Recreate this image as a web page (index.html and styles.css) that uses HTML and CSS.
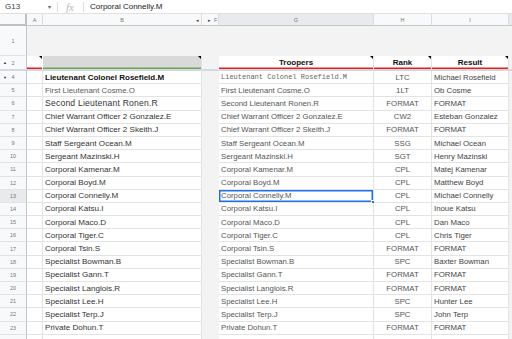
FILE: index.html
```html
<!DOCTYPE html>
<html lang="en">
<head>
  <meta charset="UTF-8" />
  <title>Troopers</title>
  <link rel="stylesheet" href="styles.css">
</head>
<body>

  <div class="formula-bar">
    <span class="name-box">G13</span>
    <span class="name-arrow">&#9662;</span>
    <span class="divider"></span>
    <span class="fx">fx</span>
    <span class="divider"></span>
    <span class="formula">Corporal Connelly.M</span>
  </div>

  <div class="sheet">
    <div class="row col-heads">
      <div class="corner"></div>
      <div class="col-head">A</div>
      <div class="col-head">B <span class="hidden-arrows">&#9666;</span></div>
      <div class="col-head col-f"><span class="hidden-arrows">&#9656;</span>F</div>
      <div class="col-head active">G</div>
      <div class="col-head">H</div>
      <div class="col-head">I</div>
      <div class="col-head blank"></div>
    </div>

    <div class="row row-1">
      <div class="row-head">1</div>
      <div class="cell grey"></div>
      <div class="cell grey"></div>
      <div class="cell grey"></div>
      <div class="cell grey"></div>
      <div class="cell grey"></div>
      <div class="cell grey"></div>
      <div class="cell grey"></div>
    </div>

    <div class="row row-2">
      <div class="row-head"><span class="fold">&#9650;</span>2</div>
      <div class="cell red-line note"></div>
      <div class="cell filled note"></div>
      <div class="cell grey"></div>
      <div class="cell title red-line note">Troopers</div>
      <div class="cell title red-line note">Rank</div>
      <div class="cell title red-line note">Result</div>
      <div class="cell grey"></div>
    </div>

    <div class="row"><div class="row-head"><span class="fold">&#9660;</span>4</div><div class="cell"></div><div class="cell name bold">Lieutenant Colonel Rosefield.M</div><div class="cell grey"></div><div class="cell trooper mono">Lieutenant Colonel Rosefield.M</div><div class="cell rank">LTC</div><div class="cell result">Michael Rosefield</div><div class="cell grey"></div></div>
    <div class="row"><div class="row-head">5</div><div class="cell"></div><div class="cell name light">First Lieutenant Cosme.O</div><div class="cell grey"></div><div class="cell trooper">First Lieutenant Cosme.O</div><div class="cell rank">1LT</div><div class="cell result">Ob Cosme</div><div class="cell grey"></div></div>
    <div class="row"><div class="row-head">6</div><div class="cell"></div><div class="cell name wide">Second Lieutenant Ronen.R</div><div class="cell grey"></div><div class="cell trooper">Second Lieutenant Ronen.R</div><div class="cell rank">FORMAT</div><div class="cell result">FORMAT</div><div class="cell grey"></div></div>
    <div class="row"><div class="row-head">7</div><div class="cell"></div><div class="cell name">Chief Warrant Officer 2 Gonzalez.E</div><div class="cell grey"></div><div class="cell trooper">Chief Warrant Officer 2 Gonzalez.E</div><div class="cell rank">CW2</div><div class="cell result">Esteban Gonzalez</div><div class="cell grey"></div></div>
    <div class="row"><div class="row-head">8</div><div class="cell"></div><div class="cell name">Chief Warrant Officer 2 Skeith.J</div><div class="cell grey"></div><div class="cell trooper">Chief Warrant Officer 2 Skeith.J</div><div class="cell rank">FORMAT</div><div class="cell result">FORMAT</div><div class="cell grey"></div></div>
    <div class="row"><div class="row-head">9</div><div class="cell"></div><div class="cell name">Staff Sergeant Ocean.M</div><div class="cell grey"></div><div class="cell trooper">Staff Sergeant Ocean.M</div><div class="cell rank">SSG</div><div class="cell result">Michael Ocean</div><div class="cell grey"></div></div>
    <div class="row"><div class="row-head">10</div><div class="cell"></div><div class="cell name">Sergeant Mazinski.H</div><div class="cell grey"></div><div class="cell trooper">Sergeant Mazinski.H</div><div class="cell rank">SGT</div><div class="cell result">Henry Mazinski</div><div class="cell grey"></div></div>
    <div class="row"><div class="row-head">11</div><div class="cell"></div><div class="cell name">Corporal Kamenar.M</div><div class="cell grey"></div><div class="cell trooper">Corporal Kamenar.M</div><div class="cell rank">CPL</div><div class="cell result">Matej Kamenar</div><div class="cell grey"></div></div>
    <div class="row"><div class="row-head">12</div><div class="cell"></div><div class="cell name">Corporal Boyd.M</div><div class="cell grey"></div><div class="cell trooper">Corporal Boyd.M</div><div class="cell rank">CPL</div><div class="cell result">Matthew Boyd</div><div class="cell grey"></div></div>
    <div class="row"><div class="row-head active">13</div><div class="cell"></div><div class="cell name">Corporal Connelly.M</div><div class="cell grey"></div><div class="cell trooper selected">Corporal Connelly.M<span class="handle"></span></div><div class="cell rank">CPL</div><div class="cell result">Michael Connelly</div><div class="cell grey"></div></div>
    <div class="row"><div class="row-head">14</div><div class="cell"></div><div class="cell name">Corporal Katsu.I</div><div class="cell grey"></div><div class="cell trooper">Corporal Katsu.I</div><div class="cell rank">CPL</div><div class="cell result">Inoue Katsu</div><div class="cell grey"></div></div>
    <div class="row"><div class="row-head">15</div><div class="cell"></div><div class="cell name">Corporal Maco.D</div><div class="cell grey"></div><div class="cell trooper">Corporal Maco.D</div><div class="cell rank">CPL</div><div class="cell result">Dan Maco</div><div class="cell grey"></div></div>
    <div class="row"><div class="row-head">16</div><div class="cell"></div><div class="cell name">Corporal Tiger.C</div><div class="cell grey"></div><div class="cell trooper">Corporal Tiger.C</div><div class="cell rank">CPL</div><div class="cell result">Chris Tiger</div><div class="cell grey"></div></div>
    <div class="row"><div class="row-head">17</div><div class="cell"></div><div class="cell name">Corporal Tsin.S</div><div class="cell grey"></div><div class="cell trooper">Corporal Tsin.S</div><div class="cell rank">FORMAT</div><div class="cell result">FORMAT</div><div class="cell grey"></div></div>
    <div class="row"><div class="row-head">18</div><div class="cell"></div><div class="cell name">Specialist Bowman.B</div><div class="cell grey"></div><div class="cell trooper">Specialist Bowman.B</div><div class="cell rank">SPC</div><div class="cell result">Baxter Bowman</div><div class="cell grey"></div></div>
    <div class="row"><div class="row-head">19</div><div class="cell"></div><div class="cell name">Specialist Gann.T</div><div class="cell grey"></div><div class="cell trooper">Specialist Gann.T</div><div class="cell rank">FORMAT</div><div class="cell result">FORMAT</div><div class="cell grey"></div></div>
    <div class="row"><div class="row-head">20</div><div class="cell"></div><div class="cell name">Specialist Langlois.R</div><div class="cell grey"></div><div class="cell trooper">Specialist Langlois.R</div><div class="cell rank">FORMAT</div><div class="cell result">FORMAT</div><div class="cell grey"></div></div>
    <div class="row"><div class="row-head">21</div><div class="cell"></div><div class="cell name">Specialist Lee.H</div><div class="cell grey"></div><div class="cell trooper">Specialist Lee.H</div><div class="cell rank">SPC</div><div class="cell result">Hunter Lee</div><div class="cell grey"></div></div>
    <div class="row"><div class="row-head">22</div><div class="cell"></div><div class="cell name">Specialist Terp.J</div><div class="cell grey"></div><div class="cell trooper">Specialist Terp.J</div><div class="cell rank">SPC</div><div class="cell result">John Terp</div><div class="cell grey"></div></div>
    <div class="row"><div class="row-head">23</div><div class="cell"></div><div class="cell name">Private Dohun.T</div><div class="cell grey"></div><div class="cell trooper">Private Dohun.T</div><div class="cell rank">FORMAT</div><div class="cell result">FORMAT</div><div class="cell grey"></div></div>
    <div class="row"><div class="row-head"></div><div class="cell"></div><div class="cell"></div><div class="cell grey"></div><div class="cell"></div><div class="cell"></div><div class="cell"></div><div class="cell grey"></div></div>
  </div>

</body>
</html>
```

FILE: styles.css
```css
* {
  box-sizing: border-box;
}

body {
  margin: 0;
  width: 512px;
  height: 339px;
  overflow: hidden;
  background: #fff;
  font-family: 'Liberation Sans', Arial, sans-serif;
}

/* formula bar */
.formula-bar {
  height: 13px;
  display: flex;
  align-items: center;
  font-size: 8px;
  color: #3c4043;
  background: #fff;
}

.name-box {
  width: 48px;
  padding-left: 5px;
}

.name-arrow {
  font-size: 6px;
  color: #5f6368;
  width: 6px;
}

.divider {
  width: 1px;
  height: 10px;
  background: #dadce0;
  margin: 0 5px 0 3px;
}

.fx {
  font-family: 'Liberation Serif', serif;
  font-style: italic;
  font-size: 11px;
  color: #b6b9bd;
  width: 14px;
  margin-left: 3px;
}

.formula {
  margin-left: 1px;
  color: #202124;
}

/* grid */
.row {
  display: grid;
  grid-template-columns: 27px 16px 159px 17px 155px 58px 77px 1fr;
  height: 13.2px;
}

.col-heads {
  height: 13px;
  border-top: 1px solid #e0e0e0;
}

.corner {
  background: #f8f9fa;
  border-right: 2px solid #bdc1c6;
  border-bottom: 2px solid #bdc1c6;
}

.col-head {
  position: relative;
  display: flex;
  align-items: center;
  justify-content: center;
  font-size: 5.5px;
  color: #777;
  background: #f8f9fa;
  border-right: 1px solid #dadce0;
  border-bottom: 1px solid #c4c7c5;
}

.col-head.active {
  background: #e8eaed;
}

.col-head.blank {
  background: #e8eaed;
  border-right: none;
}

.hidden-arrows {
  position: absolute;
  right: 2px;
  font-size: 5px;
  color: #444;
}

.col-f {
  justify-content: flex-start;
  padding-left: 6px;
}

.col-f .hidden-arrows {
  position: static;
  margin-right: 3px;
}

.row-head {
  position: relative;
  display: flex;
  align-items: center;
  justify-content: center;
  font-size: 5.5px;
  color: #777;
  background: #f8f9fa;
  border-right: 1px solid #c4c7c5;
  border-bottom: 1px solid #e3e3e3;
}

.row-head.active {
  background: #e8eaed;
}

.fold {
  position: absolute;
  left: 3px;
  font-size: 4px;
  color: #333;
}

.cell {
  position: relative;
  display: flex;
  align-items: center;
  padding: 0 2px;
  white-space: nowrap;
  overflow: hidden;
  font-size: 7.8px;
  color: #444;
  border-right: 1px solid #e2e3e3;
  border-bottom: 1px solid #e2e3e3;
}

.cell.grey {
  background: #f3f3f3;
  border-color: #f3f3f3;
}

.row-1 {
  height: 30px;
}

.row-1 .cell {
  border: none;
}

.row-2 {
  height: 15px;
}

.row-2 .row-head,
.row-2 .cell {
  border-bottom: 2px solid #d3d9e3;
}

.row-2 .cell.grey {
  border-right-color: #f3f3f3;
}

.cell.red-line {
  box-shadow: inset 0 -1.5px 0 #ea1d1d;
  border-right-color: #fff;
}

.cell.filled {
  background: #d9d9d9;
  box-shadow: inset 0 -1.5px 0 #6aa84f;
}

.cell.title {
  justify-content: center;
  font-size: 8px;
  font-weight: bold;
  color: #111;
  border-right-color: #e2e3e3;
}

.note::after {
  content: "";
  position: absolute;
  top: 0;
  right: 0;
  border-top: 3px solid #000;
  border-left: 3px solid transparent;
}

.name {
  font-size: 8.1px;
  color: #333;
}

.name.bold {
  font-size: 8px;
  font-weight: bold;
  color: #111;
}

.name.light {
  font-size: 7.9px;
  color: #5a5a5a;
}

.name.wide {
  font-size: 8.6px;
  letter-spacing: 0.2px;
}

.trooper {
  color: #555;
}

.trooper.mono {
  font-family: 'Liberation Mono', monospace;
  font-size: 7px;
  color: #666;
}

.trooper.selected {
  overflow: visible;
  box-shadow: inset 0 0 0 1.5px #1a73e8;
}

.handle {
  position: absolute;
  right: -2px;
  bottom: -2px;
  width: 4px;
  height: 4px;
  background: #1a73e8;
  border: 1px solid #fff;
}

.rank {
  justify-content: center;
  color: #555;
}

.result {
  color: #444;
}
```
